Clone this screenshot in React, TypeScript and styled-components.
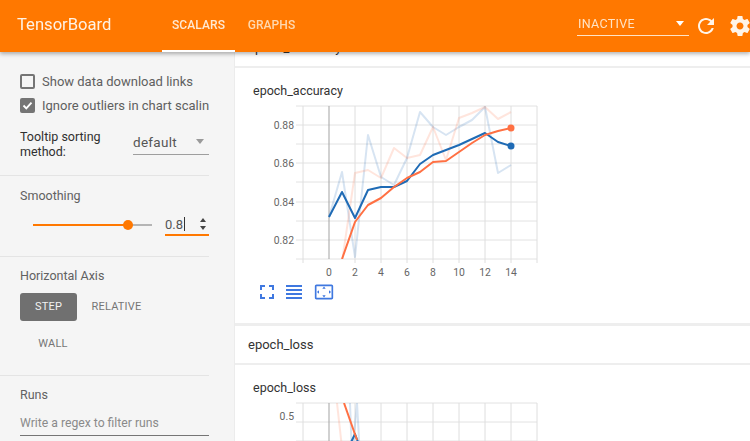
import React from 'react';
import styled, { createGlobalStyle } from 'styled-components';

const GlobalStyle = createGlobalStyle`
  html, body {
    margin: 0;
    height: 441px;
    overflow: hidden;
    background: #fff;
    font-family: Roboto, "Liberation Sans", sans-serif;
  }
`;

// the reference is a slightly soft, rescaled capture
const Page = styled.div`
  width: 750px;
  height: 441px;
  display: flex;
  flex-direction: column;
  overflow: hidden;
  filter: blur(0.35px);
`;

const TopBar = styled.header`
  position: relative;
  z-index: 2;
  flex: 0 0 52px;
  display: flex;
  align-items: stretch;
  background: #ff7800;
  box-shadow: 0 2px 4px rgba(0, 0, 0, 0.3);
  overflow: hidden;
`;

const Brand = styled.div`
  width: 162px;
  padding-left: 17px;
  box-sizing: border-box;
  font-size: 16.6px;
  line-height: 50px;
  color: #fff2e4;
`;

const Tab = styled.div<{ $active?: boolean }>`
  width: 73px;
  text-align: center;
  font-size: 12px;
  font-weight: 500;
  line-height: 50px;
  letter-spacing: 0.1px;
  color: ${props => props.$active ? '#ffe9d2' : '#ffd9b0'};
  border-bottom: 2px solid ${props => props.$active ? '#fff' : 'transparent'};
`;

const TopActions = styled.div`
  margin-left: auto;
  display: flex;
  align-items: center;
  margin-right: -2px;
`;

const RunSelect = styled.div`
  width: 112px;
  height: 24px;
  margin: 0 5px 4px 0;
  display: flex;
  align-items: center;
  justify-content: space-between;
  padding: 0 5px 0 1px;
  box-sizing: border-box;
  border-bottom: 1px solid #ffe3c6;
  font-size: 12.5px;
  letter-spacing: 0.3px;
  color: #ffe3c6;
`;

const Caret = styled.span<{ $color: string }>`
  width: 0;
  height: 0;
  border-left: 4.5px solid transparent;
  border-right: 4.5px solid transparent;
  border-top: 5px solid ${props => props.$color};
`;

const TopIcon = styled.svg<{ $gap?: number }>`
  width: 24px;
  height: 24px;
  fill: #fff4e8;
  margin-left: ${props => props.$gap || 0}px;
`;

const Body = styled.div`
  flex: 1;
  min-height: 0;
  display: flex;
`;

const Sidebar = styled.aside`
  flex: 0 0 235px;
  box-sizing: border-box;
  background: #f5f5f5;
  border-right: 1px solid #ececec;
  overflow: hidden;
`;

const SideSection = styled.section<{ $height: number; $top: number; $last?: boolean }>`
  width: 209px;
  height: ${props => props.$height}px;
  padding: ${props => props.$top}px 0 0 20px;
  box-sizing: border-box;
  border-bottom: ${props => props.$last ? 'none' : '1px solid #e4e4e4'};
`;

const CheckRow = styled.div`
  display: flex;
  align-items: center;
  gap: 7px;
  height: 24px;
  white-space: nowrap;
  overflow: hidden;
  font-size: 13px;
  color: #5f5f5f;
`;

const CheckBox = styled.span<{ $checked?: boolean }>`
  flex: 0 0 15px;
  width: 15px;
  height: 15px;
  box-sizing: border-box;
  border-radius: 2px;
  border: 2px solid #757575;
  background: ${props => props.$checked ? '#757575' : 'transparent'};
  display: flex;
  align-items: center;
  justify-content: center;
`;

const SortRow = styled.div`
  display: flex;
  align-items: flex-start;
  margin-top: 12px;
`;

const SortLabel = styled.div`
  width: 113px;
  font-size: 12.5px;
  line-height: 15px;
  color: #303030;
`;

const SortSelect = styled.div`
  flex: 1;
  height: 25px;
  display: flex;
  align-items: center;
  justify-content: space-between;
  padding-right: 5px;
  border-bottom: 1px solid #9e9e9e;
  font-size: 13.5px;
  letter-spacing: 0.3px;
  color: #555;
`;

const SectionLabel = styled.div`
  font-size: 12.5px;
  line-height: 16px;
  color: #616161;
`;

const SliderRow = styled.div`
  display: flex;
  align-items: center;
  margin-top: 10px;
`;

const SliderTrack = styled.div`
  position: relative;
  width: 119px;
  height: 2px;
  margin: 0 13px 0 13px;
  background: #b5b5b5;
`;

const SliderFill = styled.div`
  height: 100%;
  background: #ff7800;
`;

const SliderKnob = styled.span`
  position: absolute;
  top: -4px;
  width: 10px;
  height: 10px;
  margin-left: -5px;
  border-radius: 50%;
  background: #ff7800;
`;

const SmoothInput = styled.div`
  flex: 1;
  height: 20px;
  display: flex;
  align-items: center;
  justify-content: space-between;
  padding-right: 3px;
  border-bottom: 2px solid #ff7800;
  font-size: 13px;
  color: #555;
`;

const TextCursor = styled.span`
  display: inline-block;
  width: 1px;
  height: 14px;
  margin-left: 1px;
  background: #333;
  vertical-align: -2px;
`;

const Spinner = styled.span`
  display: flex;
  flex-direction: column;
  gap: 4px;
`;

const SpinArrow = styled.span<{ $up?: boolean }>`
  width: 0;
  height: 0;
  border-left: 3px solid transparent;
  border-right: 3px solid transparent;
  border-${props => props.$up ? 'bottom' : 'top'}: 4px solid #444;
`;

const AxisButtons = styled.div`
  display: flex;
  flex-wrap: wrap;
  margin-top: 9px;
`;

const AxisButton = styled.div<{ $active?: boolean; $width: number }>`
  width: ${props => props.$width}px;
  height: 28px;
  margin-bottom: 9px;
  border-radius: 3px;
  text-align: center;
  font-size: 11px;
  line-height: 28px;
  letter-spacing: 0.2px;
  color: ${props => props.$active ? '#f2f2f2' : '#757575'};
  background: ${props => props.$active ? '#707070' : 'transparent'};
`;

const RegexInput = styled.div`
  height: 24px;
  margin-top: 9px;
  box-sizing: border-box;
  border-bottom: 1px solid #757575;
  font-size: 12.2px;
  line-height: 22px;
  color: #8a8a8a;
`;

const Main = styled.main`
  flex: 1;
  min-width: 0;
  overflow: hidden;
  background: #eee;
`;

// the reference is scrolled by 23px, so the first card starts under the bar
const ScrollContent = styled.div`
  margin-top: -23px;
  display: flex;
  flex-direction: column;
  gap: 3px;
`;

const Card = styled.section`
  background: #fff;
`;

const CardHead = styled.div`
  height: 37px;
  padding-left: 13px;
  border-bottom: 2px solid #eee;
  font-size: 13px;
  line-height: 37px;
  color: #333;
`;

const CardBody = styled.div`
  height: 255px;
  padding: 15px 0 0 18px;
  box-sizing: border-box;
`;

const ChartTitle = styled.div`
  font-size: 12.5px;
  line-height: 16px;
  color: #333;
`;

const ChartFrame = styled.svg`
  display: block;
  width: 290px;
  height: 180px;
  margin: 1px 0 0 -3px;
`;

const TickText = styled.text`
  font-family: Roboto, "Liberation Sans", sans-serif;
  font-size: 10.4px;
  fill: #666;
`;

const ChartTools = styled.div`
  display: flex;
  gap: 3px;
  margin-left: 2px;
`;

const ToolIcon = styled.svg`
  width: 24px;
  height: 24px;
  fill: #3f78e0;
`;

const ToolIconWide = styled(ToolIcon)`
  width: 20px;
  margin: 0 0 0 5px;
`;

const stepX = (step: number) => 329 + step * 13;
const toPoints = (ys: number[], first = 0) =>
  ys.map((y, i) => `${stepX(i + first)},${y}`).join(' ');

const accuracyRawBlue = [217, 172, 257, 135, 177, 185, 158, 112, 127, 135, 127, 120, 107, 173, 165];
const accuracyBlue = [217, 192, 218, 190, 187, 187, 181, 164, 155, 150, 145, 139, 133, 142, 146];
const accuracyRawOrange = [330, 262, 173, 170, 178, 148, 158, 155, 127, 160, 118, 113, 107, 119, 112];
const accuracyOrange = [259, 222, 205, 198, 187, 178, 172, 162, 161, 152, 143, 135, 131, 128];

const gridY = [106, 125, 144, 163, 182, 202, 221, 240, 259];
const gridX = [303, 355, 381, 407, 433, 459, 485, 511, 537];
const xTicks = [0, 2, 4, 6, 8, 10, 12, 14];

interface ChartProps {
  yTicks: { label: string; y: number }[];
  children: React.ReactNode;
}

function Chart({ yTicks, children }: ChartProps) {
  return (
    <ChartFrame viewBox="250 100 290 180">
      <defs>
        <clipPath id="plot">
          <rect x="303" y="106" width="234" height="153" />
        </clipPath>
      </defs>
      {gridY.map(y => <line key={y} x1="296" x2="537" y1={y} y2={y} stroke="#e2e2e2" />)}
      {gridX.map(x => <line key={x} x1={x} x2={x} y1="106" y2="263" stroke="#dedede" />)}
      <line x1="329" x2="329" y1="106" y2="259" stroke="#a3a3a3" />
      {yTicks.map(t => (
        <TickText key={t.label} x="294" y={t.y + 4} textAnchor="end">{t.label}</TickText>
      ))}
      {xTicks.map(t => (
        <TickText key={t} x={stepX(t)} y="276" textAnchor="middle">{t}</TickText>
      ))}
      <g clipPath="url(#plot)" fill="none" strokeLinejoin="round">
        {children}
      </g>
    </ChartFrame>
  );
}

function ToolRow() {
  return (
    <ChartTools>
      <ToolIcon viewBox="0 0 24 24">
        <path d="M7 14H5v5h5v-2H7v-3zm-2-4h2V7h3V5H5v5zm12 7h-3v2h5v-5h-2v3zM14 5v2h3v3h2V5h-5z" />
      </ToolIcon>
      <ToolIcon viewBox="0 0 24 24">
        <path d="M4 15h16v-2H4v2zm0 4h16v-2H4v2zm0-8h16V9H4v2zm0-6v2h16V5H4z" />
      </ToolIcon>
      <ToolIconWide viewBox="0 0 24 24">
        <path d="M12.01 5.5L10 8h4l-1.99-2.5zM18 10v4l2.5-1.99L18 10zM6 10l-2.5 2.01L6 14v-4zm8 6h-4l2.01 2.5L14 16zm7-13H3c-1.1 0-2 .9-2 2v14c0 1.1.9 2 2 2h18c1.1 0 2-.9 2-2V5c0-1.1-.9-2-2-2zm0 16.01H3V4.99h18v14.02z" />
      </ToolIconWide>
    </ChartTools>
  );
}

export default function App() {
  return (
    <Page>
      <GlobalStyle />
      <TopBar>
        <Brand>TensorBoard</Brand>
        <Tab $active>SCALARS</Tab>
        <Tab>GRAPHS</Tab>
        <TopActions>
          <RunSelect>
            INACTIVE
            <Caret $color="#fff" />
          </RunSelect>
          <TopIcon viewBox="0 0 24 24">
            <path d="M17.65 6.35C16.2 4.9 14.21 4 12 4c-4.42 0-7.99 3.58-7.99 8s3.57 8 7.99 8c3.73 0 6.84-2.55 7.73-6h-2.08c-.82 2.33-3.04 4-5.65 4-3.31 0-6-2.69-6-6s2.69-6 6-6c1.66 0 3.14.69 4.22 1.78L13 11h7V4l-2.35 2.35z" />
          </TopIcon>
          <TopIcon viewBox="0 0 24 24" $gap={10}>
            <path d="M19.43 12.98c.04-.32.07-.64.07-.98s-.03-.66-.07-.98l2.11-1.65c.19-.15.24-.42.12-.64l-2-3.46c-.12-.22-.39-.3-.61-.22l-2.49 1c-.52-.4-1.08-.73-1.69-.98l-.38-2.65C14.46 2.18 14.25 2 14 2h-4c-.25 0-.46.18-.49.42l-.38 2.65c-.61.25-1.17.59-1.69.98l-2.49-1c-.23-.09-.49 0-.61.22l-2 3.46c-.13.22-.07.49.12.64l2.11 1.65c-.04.32-.07.65-.07.98s.03.66.07.98l-2.11 1.65c-.19.15-.24.42-.12.64l2 3.46c.12.22.39.3.61.22l2.49-1c.52.4 1.08.73 1.69.98l.38 2.65c.03.24.24.42.49.42h4c.25 0 .46-.18.49-.42l.38-2.65c.61-.25 1.17-.59 1.69-.98l2.49 1c.23.09.49 0 .61-.22l2-3.46c.12-.22.07-.49-.12-.64l-2.11-1.65zM12 15.5c-1.93 0-3.5-1.57-3.5-3.5s1.57-3.5 3.5-3.5 3.5 1.57 3.5 3.5-1.57 3.5-3.5 3.5z" />
          </TopIcon>
        </TopActions>
      </TopBar>
      <Body>
        <Sidebar>
          <SideSection $height={124} $top={17}>
            <CheckRow>
              <CheckBox />
              Show data download links
            </CheckRow>
            <CheckRow>
              <CheckBox $checked>
                <svg width="11" height="11" viewBox="0 0 11 11">
                  <path d="M1.5 5.5l2.8 2.8 5.2-5.6" fill="none" stroke="#fff" strokeWidth="1.9" />
                </svg>
              </CheckBox>
              Ignore outliers in chart scaling
            </CheckRow>
            <SortRow>
              <SortLabel>Tooltip sorting method:</SortLabel>
              <SortSelect>
                default
                <Caret $color="#9a9a9a" />
              </SortSelect>
            </SortRow>
          </SideSection>
          <SideSection $height={81} $top={12}>
            <SectionLabel>Smoothing</SectionLabel>
            <SliderRow>
              <SliderTrack>
                <SliderFill style={{ width: `${(95 / 119) * 100}%` }} />
                <SliderKnob style={{ left: `${(95 / 119) * 100}%` }} />
              </SliderTrack>
              <SmoothInput>
                <span>0.8<TextCursor /></span>
                <Spinner>
                  <SpinArrow $up />
                  <SpinArrow />
                </Spinner>
              </SmoothInput>
            </SliderRow>
          </SideSection>
          <SideSection $height={119} $top={11}>
            <SectionLabel>Horizontal Axis</SectionLabel>
            <AxisButtons>
              <AxisButton $active $width={57}>STEP</AxisButton>
              <AxisButton $width={79}>RELATIVE</AxisButton>
              <AxisButton $width={66}>WALL</AxisButton>
            </AxisButtons>
          </SideSection>
          <SideSection $height={70} $top={11} $last>
            <SectionLabel>Runs</SectionLabel>
            <RegexInput>Write a regex to filter runs</RegexInput>
          </SideSection>
        </Sidebar>
        <Main>
          <ScrollContent>
            <Card>
              <CardHead>epoch_accuracy</CardHead>
              <CardBody>
                <ChartTitle>epoch_accuracy</ChartTitle>
                <Chart
                  yTicks={[
                    { label: '0.88', y: 125 },
                    { label: '0.86', y: 163 },
                    { label: '0.84', y: 202 },
                    { label: '0.82', y: 240 },
                  ]}
                >
                  <polyline points={toPoints(accuracyRawBlue)} stroke="#1f6bb5" strokeOpacity="0.18" strokeWidth="2" />
                  <polyline points={toPoints(accuracyRawOrange)} stroke="#ff7043" strokeOpacity="0.18" strokeWidth="2" />
                  <polyline points={toPoints(accuracyBlue)} stroke="#1f6bb5" strokeWidth="2" />
                  <polyline points={toPoints(accuracyOrange, 1)} stroke="#ff7043" strokeWidth="2" />
                  <circle cx="511" cy="146" r="3.5" fill="#1f6bb5" />
                  <circle cx="511" cy="128" r="3.5" fill="#ff7043" />
                </Chart>
                <ToolRow />
              </CardBody>
            </Card>
            <Card>
              <CardHead>epoch_loss</CardHead>
              <CardBody>
                <ChartTitle>epoch_loss</ChartTitle>
                <Chart yTicks={[{ label: '0.5', y: 119 }]}>
                  <polyline points="350,106 352,160 357,106 360,160" stroke="#1f6bb5" strokeOpacity="0.18" strokeWidth="2" />
                  <polyline points="337,106 343,160" stroke="#ff7043" strokeOpacity="0.18" strokeWidth="2" />
                  <polyline points="338,172 355,137 368,172" stroke="#1f6bb5" strokeWidth="2" />
                  <polyline points="344,106 357,143" stroke="#ff7043" strokeWidth="2" />
                </Chart>
              </CardBody>
            </Card>
          </ScrollContent>
        </Main>
      </Body>
    </Page>
  );
}
